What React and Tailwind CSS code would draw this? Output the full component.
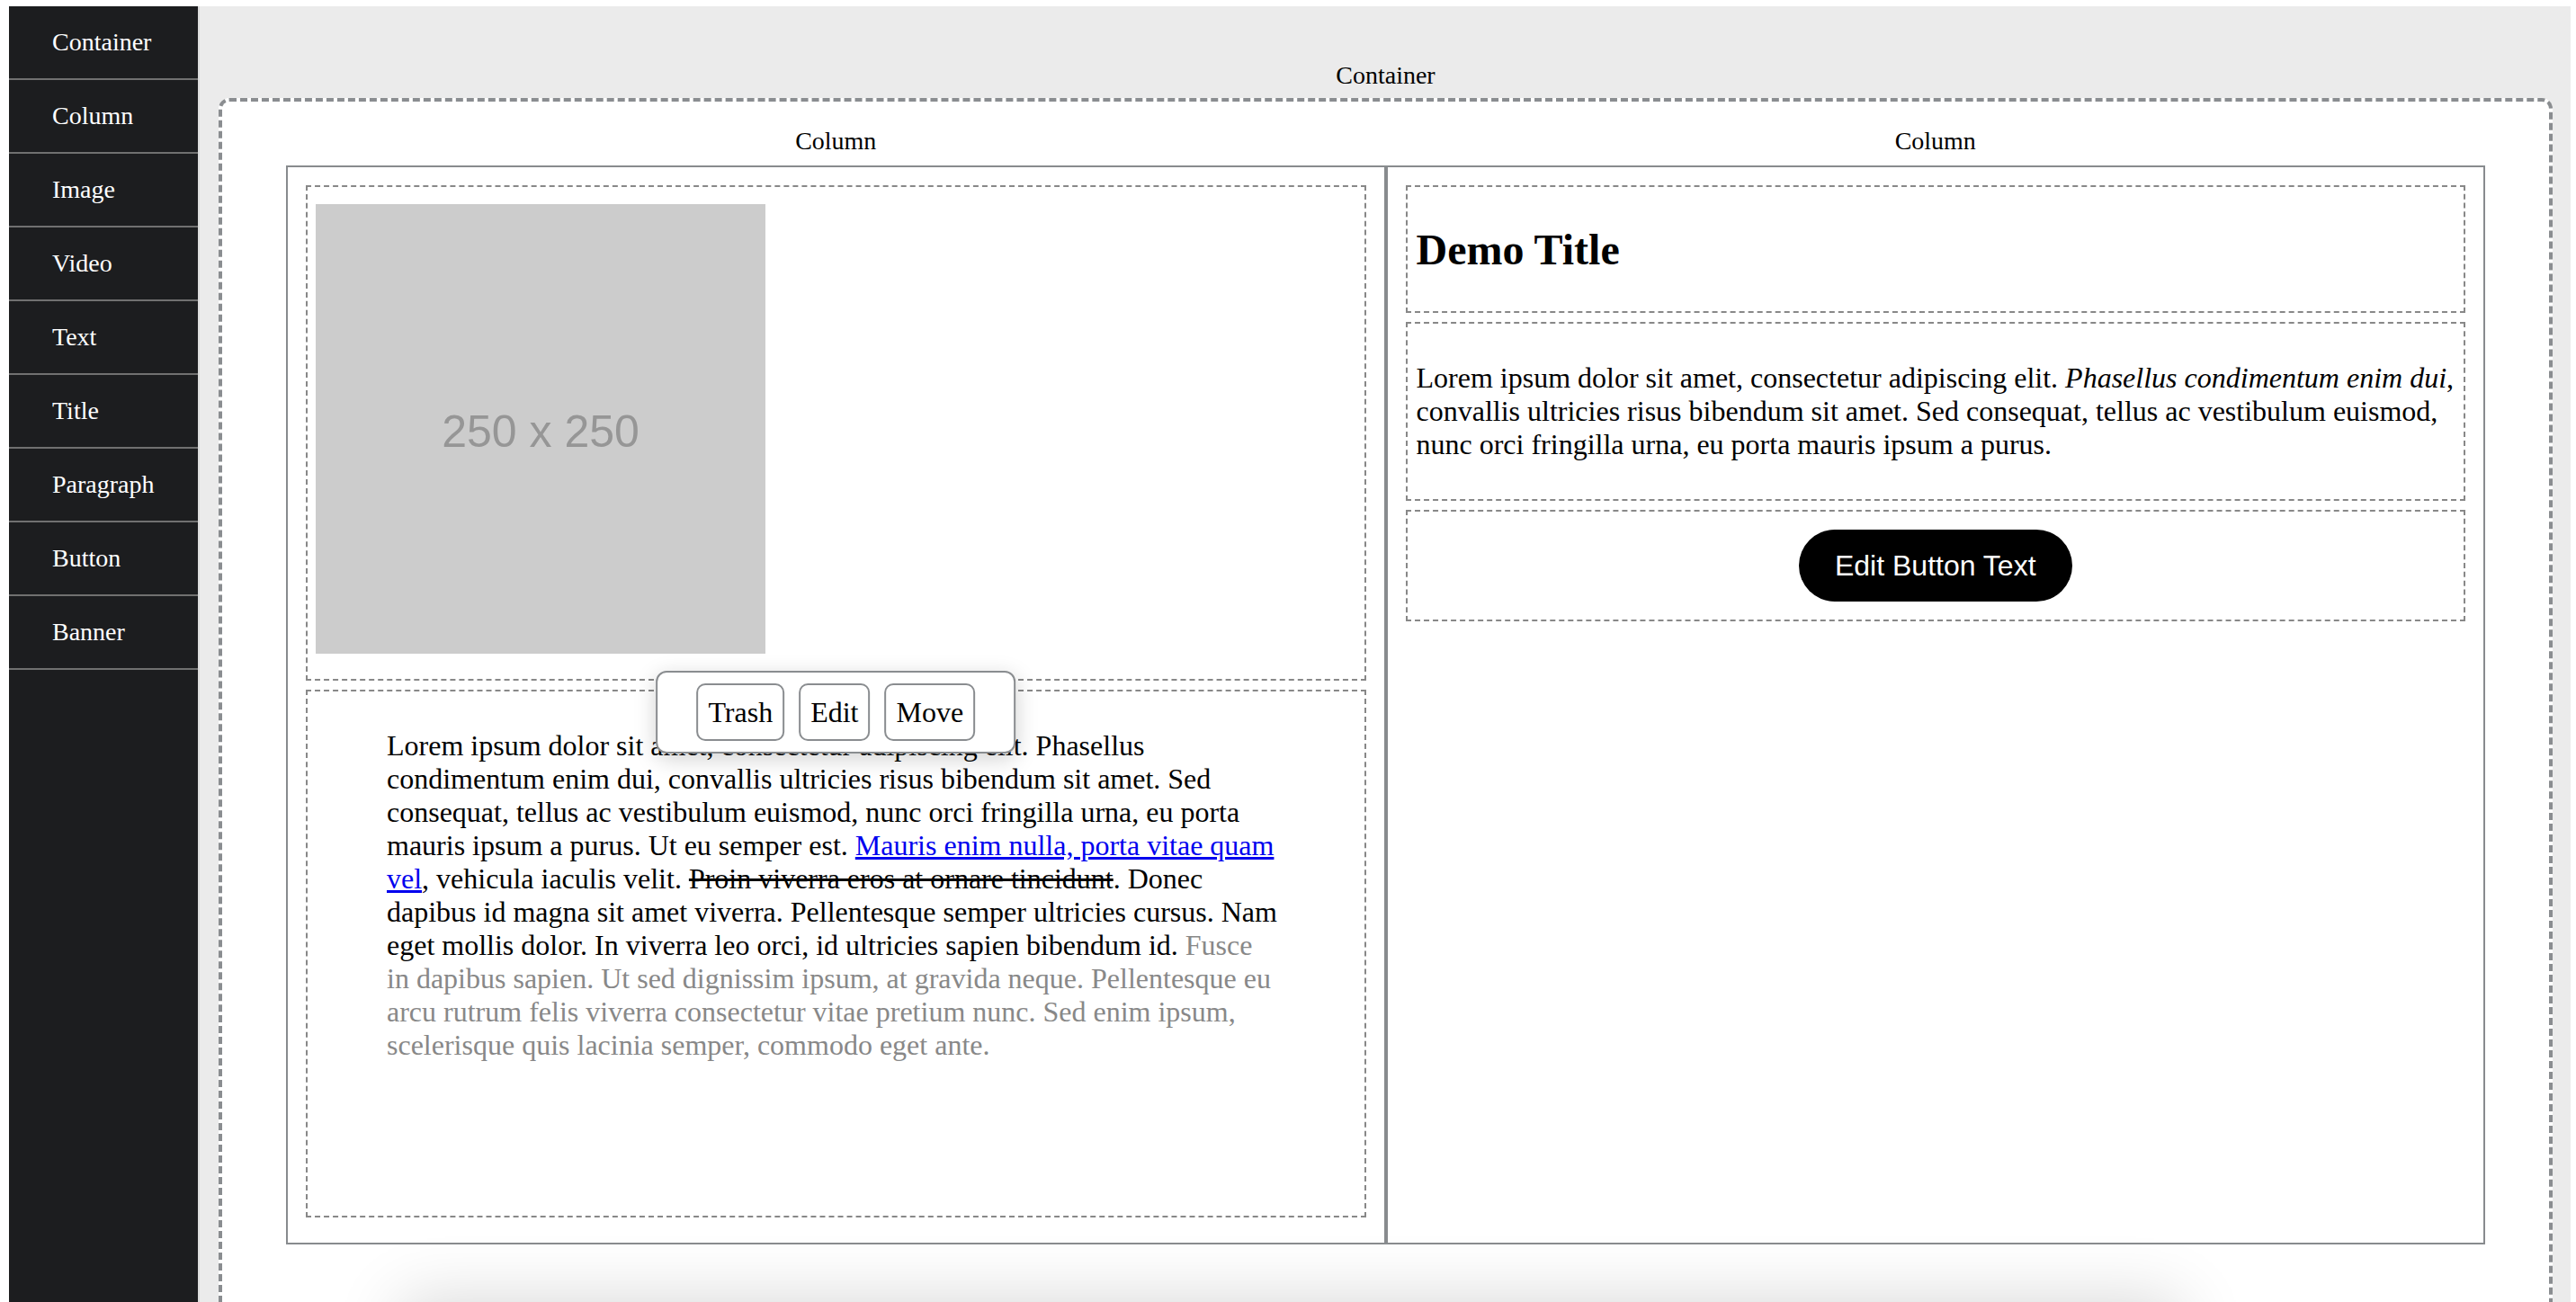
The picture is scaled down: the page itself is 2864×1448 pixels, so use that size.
import React from "react";

const items = ["Container", "Column", "Image", "Video", "Text", "Title", "Paragraph", "Button", "Banner"];

const serif = { fontFamily: '"Liberation Serif", "Times New Roman", serif' };

const Sidebar = () => (
  <div className="w-[210px] shrink-0 bg-[#1c1d1f]">
    {items.map((item) => (
      <div
        key={item}
        className="h-[82px] flex items-center pl-[48px] border-b-2 border-[#707070] text-white text-[28px] leading-[32px]"
      >
        {item}
      </div>
    ))}
  </div>
);

const Toolbar = () => (
  <div className="absolute top-[-23px] left-1/2 -translate-x-1/2 z-10 flex gap-[16px] bg-white border-2 border-[#8a8d90] rounded-[12px] px-[43px] py-[12px] shadow-[0_6px_24px_rgba(0,0,0,0.18)]">
    {["Trash", "Edit", "Move"].map((b) => (
      <button
        key={b}
        className="h-[64px] px-[11px] border-2 border-[#8a8d90] rounded-[10px] bg-white text-black text-[32px] leading-[37px]"
        style={serif}
      >
        {b}
      </button>
    ))}
  </div>
);

const LeftColumn = () => (
  <div className="flex flex-col">
    <div className="text-center text-[28px] leading-[32px] text-black">Column</div>
    <div className="mt-[11px] h-[1200px] border-2 border-[#888b8e] px-[20px] pt-[20px]">
      <div className="h-[551px] border-2 border-dashed border-[#888] pl-[9px] pt-[19px]">
        <div className="w-[500px] h-[500px] bg-[#cccccc] flex items-center justify-center">
          <span
            className="pt-[6px] text-[50px] text-[#969696]"
            style={{ fontFamily: '"Liberation Sans", Arial, sans-serif' }}
          >
            250 x 250
          </span>
        </div>
      </div>
      <div className="relative mt-[10px] h-[587px] border-2 border-dashed border-[#888] p-[10px]">
        <Toolbar />
        <p className="my-[32px] ml-[78px] mr-[83px] text-[32px] leading-[37px] text-black">
          Lorem ipsum dolor sit amet, consectetur adipiscing elit. Phasellus condimentum enim dui, convallis
          ultricies risus bibendum sit amet. Sed consequat, tellus ac vestibulum euismod, nunc orci fringilla urna,
          eu porta mauris ipsum a purus. Ut eu semper est.{" "}
          <a href="#" className="text-[#0000ee] underline">
            Mauris enim nulla, porta vitae quam vel
          </a>
          , vehicula iaculis velit. <s>Proin viverra eros at ornare tincidunt</s>. Donec dapibus id magna sit amet
          viverra. Pellentesque semper ultricies cursus. Nam eget mollis dolor. In viverra leo orci, id ultricies
          sapien bibendum id.{" "}
          <span className="text-[#888]">
            Fusce in dapibus sapien. Ut sed dignissim ipsum, at gravida neque. Pellentesque eu arcu rutrum felis
            viverra consectetur vitae pretium nunc. Sed enim ipsum, scelerisque quis lacinia semper, commodo eget
            ante.
          </span>
        </p>
      </div>
    </div>
  </div>
);

const RightColumn = () => (
  <div className="flex flex-col">
    <div className="text-center text-[28px] leading-[32px] text-black">Column</div>
    <div className="mt-[11px] h-[1200px] border-2 border-[#888b8e] px-[20px] pt-[20px]">
      <div className="h-[142px] border-2 border-dashed border-[#888] px-[10px] flex items-center">
        <h2 className="text-[48px] leading-[55px] font-bold text-black">Demo Title</h2>
      </div>
      <div className="mt-[10px] h-[199px] border-2 border-dashed border-[#888] p-[10px]">
        <p className="my-[32px] text-[32px] leading-[37px] text-black">
          Lorem ipsum dolor sit amet, consectetur adipiscing elit. <i>Phasellus condimentum enim dui</i>, convallis
          ultricies risus bibendum sit amet. Sed consequat, tellus ac vestibulum euismod, nunc orci fringilla urna,
          eu porta mauris ipsum a purus.
        </p>
      </div>
      <div className="mt-[10px] h-[124px] border-2 border-dashed border-[#888] flex items-center justify-center">
        <button
          className="h-[80px] px-[40px] rounded-full bg-black text-white text-[32px]"
          style={{ fontFamily: '"Liberation Sans", Arial, sans-serif' }}
        >
          Edit Button Text
        </button>
      </div>
    </div>
  </div>
);

export default function App() {
  return (
    <div className="h-[1448px] overflow-hidden bg-white flex pl-[10px] pt-[7px] pr-[6px]" style={serif}>
      <Sidebar />
      <div className="w-[2px] shrink-0 bg-[#dcdcdc]" />
      <div className="flex-1 bg-[#ebebeb] pl-[21px] pr-[20px] overflow-hidden">
        <div className="pt-[61px] mb-[9px] text-center text-[28px] leading-[32px] text-black">Container</div>
        <div className="border-4 border-dashed border-[#8a8d90] rounded-[12px] bg-white px-[71px] pt-[28px] pb-[200px]">
          <div className="grid grid-cols-2">
            <LeftColumn />
            <RightColumn />
          </div>
          <div className="mt-[86px] ml-[152px] w-[1930px] h-[300px] bg-white shadow-[0_0_70px_24px_rgba(0,0,0,0.16)]" />
        </div>
      </div>
    </div>
  );
}
